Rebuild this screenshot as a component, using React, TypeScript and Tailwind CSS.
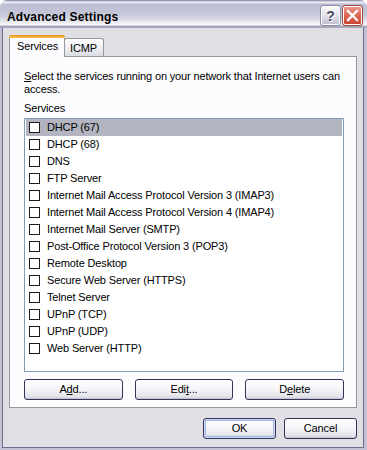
import React from "react";

const services = [
  "DHCP (67)",
  "DHCP (68)",
  "DNS",
  "FTP Server",
  "Internet Mail Access Protocol Version 3 (IMAP3)",
  "Internet Mail Access Protocol Version 4 (IMAP4)",
  "Internet Mail Server (SMTP)",
  "Post-Office Protocol Version 3 (POP3)",
  "Remote Desktop",
  "Secure Web Server (HTTPS)",
  "Telnet Server",
  "UPnP (TCP)",
  "UPnP (UDP)",
  "Web Server (HTTP)",
];

const XpButton = ({
  children,
  isDefault = false,
  className = "",
}: {
  children: React.ReactNode;
  isDefault?: boolean;
  className?: string;
}) => (
  <button
    type="button"
    className={`h-[21px] rounded-[3px] border border-[#34345a] bg-[linear-gradient(to_bottom,#ffffff_0%,#f6f6f9_45%,#e4e4ec_85%,#d2d2dc_100%)] text-[11px] leading-none text-black ${
      isDefault
        ? "shadow-[inset_0_0_0_1px_#cfdcf6,inset_0_0_0_2px_#9db6e6]"
        : "shadow-[inset_0_-1px_0_#c6c6d2]"
    } ${className}`}
  >
    {children}
  </button>
);

const Checkbox = () => (
  <span className="w-[11px] h-[11px] shrink-0 border border-[#1c1c1c] bg-white" />
);

export default function App() {
  return (
    <div
      className="w-[367px] h-[450px] flex flex-col tracking-[-0.15px] text-black"
      style={{ fontFamily: '"Liberation Sans", Arial, sans-serif' }}
    >
      {/* title bar */}
      <div className="h-[28px] shrink-0 flex items-start justify-between rounded-t-[7px] bg-[linear-gradient(to_bottom,#9a9ab2_0px,#9a9ab2_1px,#ffffff_2px,#bebed4_4px,#c6c6d9_14px,#d8d8e4_19px,#eeeef3_23px,#fbfbfd_25px,#a6a6ba_26px,#a6a6ba_28px)]">
        <span className="mt-[10px] ml-[7px] text-[12px] leading-[14px] font-bold tracking-[0.2px]">
          Advanced Settings
        </span>
        <div className="mt-[5px] mr-[4px] flex gap-[1px]">
          <div className="w-[21px] h-[21px] rounded-[3px] border border-[#8c8ca8] shadow-[inset_0_0_0_1px_#ffffff] bg-[linear-gradient(to_bottom,#fbfbfd,#e2e2ec_50%,#bcbcd0)] flex items-center justify-center">
            <span className="text-[14px] font-bold leading-none text-[#4c4c60] [text-shadow:1px_1px_0_#ffffff] tracking-normal">
              ?
            </span>
          </div>
          <div className="w-[21px] h-[21px] rounded-[3px] border border-[#9a4a3e] shadow-[inset_0_0_0_1px_#ffffff] bg-[linear-gradient(to_bottom,#eba194,#de6a58_45%,#c8402e)] flex items-center justify-center">
            <svg width="13" height="13" viewBox="0 0 13 13">
              <path
                d="M2 2 L11 11 M11 2 L2 11"
                stroke="#ffffff"
                strokeWidth="2.3"
                strokeLinecap="square"
              />
            </svg>
          </div>
        </div>
      </div>

      {/* frame */}
      <div className="flex-1 flex bg-[#c2c2d4] pl-[2px] pr-[3px] pb-[2px]">
        <div className="flex-1 flex flex-col border-x border-b border-[#6c6c8c] bg-[#e0dfe3] pt-[7px] px-[6px]">
          {/* tabs */}
          <div className="flex items-end h-[21px]">
            <div className="relative z-10 w-[56px] h-[22px] mb-[-1px] flex flex-col bg-[#fcfcfe] border-x border-[#919b9c] rounded-t-[3px]">
              <div className="h-[3px] mx-[-1px] rounded-t-[3px] bg-[linear-gradient(to_bottom,#e68b2c,#ffc73c)]" />
              <span className="pl-[7px] pt-[2px] text-[11px] leading-[13px]">Services</span>
            </div>
            <div className="ml-[-1px] w-[40px] h-[18px] border-x border-t border-[#919b9c] rounded-t-[3px] bg-[linear-gradient(to_bottom,#ffffff,#ececf1_60%,#dcdce4)]">
              <span className="block pl-[5px] pt-[3px] text-[11px] leading-[13px]">ICMP</span>
            </div>
          </div>

          {/* panel */}
          <div className="border border-[#919b9c] bg-[#fcfcfe] pt-[13px] pl-[14px] pr-[12px] pb-[7px] text-[11px] leading-[13px]">
            <p className="whitespace-nowrap">
              <u>S</u>elect the services running on your network that Internet users can
              <br />
              access.
            </p>
            <p className="mt-[6px]">Services</p>
            <div className="mt-[3px] h-[254px] border border-[#7f9db9] bg-white p-[0_1px]">
              {services.map((s, i) => (
                <div
                  key={s}
                  className={`h-[17px] flex items-center gap-[7px] pl-[3px] whitespace-nowrap ${
                    i === 0 ? "bg-[#b2b4bf]" : ""
                  }`}
                >
                  <Checkbox />
                  <span>{s}</span>
                </div>
              ))}
            </div>
            <div className="mt-[7px] grid grid-cols-3 gap-[12px]">
              <XpButton>
                A<u>d</u>d...
              </XpButton>
              <XpButton>
                Edi<u>t</u>...
              </XpButton>
              <XpButton>
                D<u>e</u>lete
              </XpButton>
            </div>
          </div>

          {/* dialog buttons */}
          <div className="mt-[10px] flex justify-end gap-[8px]">
            <XpButton isDefault className="w-[73px]">
              OK
            </XpButton>
            <XpButton className="w-[73px]">Cancel</XpButton>
          </div>
        </div>
      </div>
    </div>
  );
}
